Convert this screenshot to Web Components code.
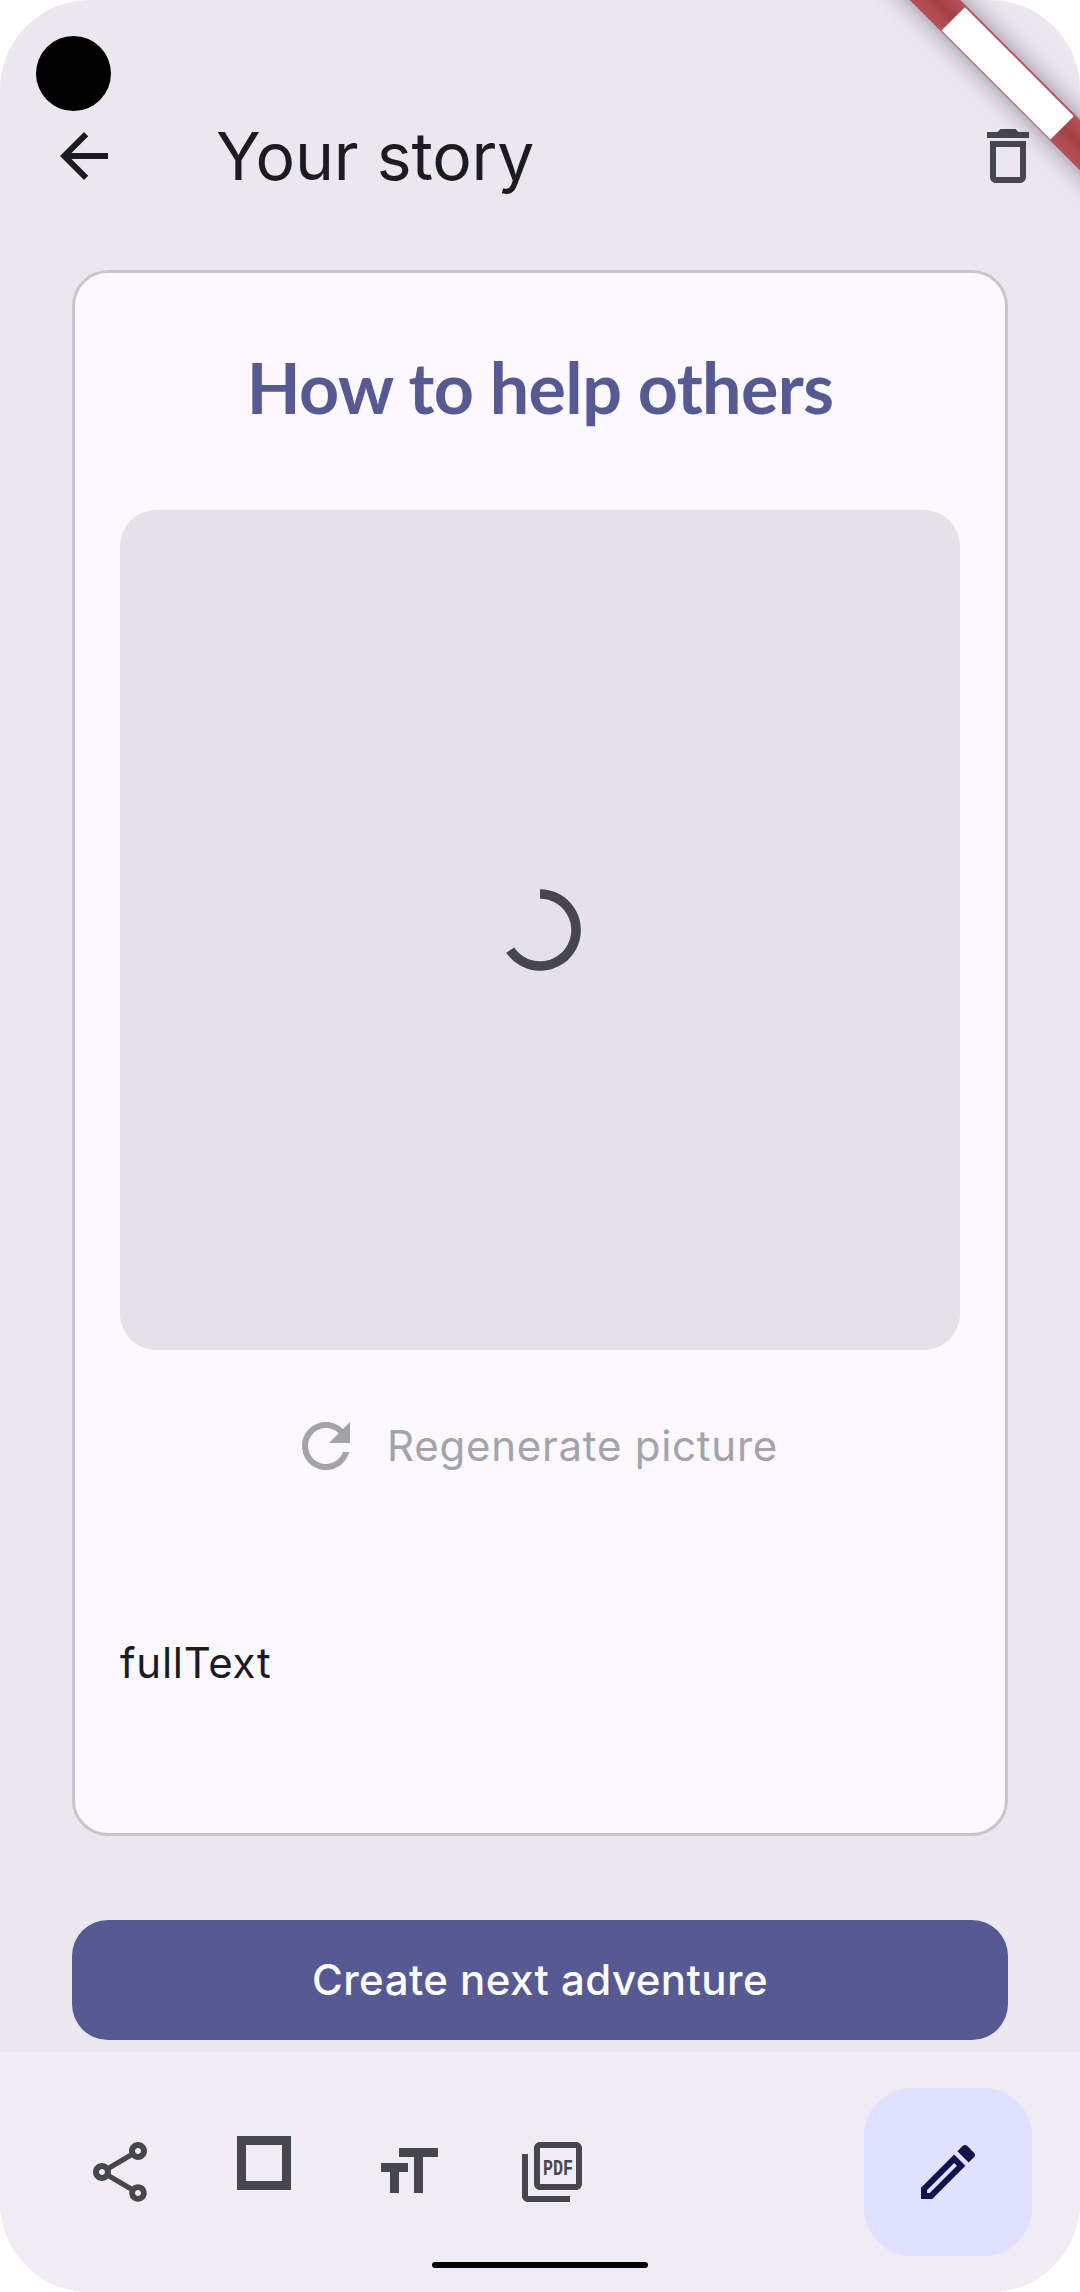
<!DOCTYPE html>
<html>
<head>
<meta charset="utf-8">
<title>Your story</title>
<style>
  html, body { margin: 0; padding: 0; background: #fff; }
  body { font-family: Inter, "Noto Sans", sans-serif; }
</style>
</head>
<body>
<story-screen>
  <top-bar slot="top" heading="Your story"></top-bar>
  <story-card slot="main" heading="How to help others" body="fullText"></story-card>
  <primary-button slot="main">Create next adventure</primary-button>
  <action-bar slot="bottom"></action-bar>
</story-screen>

<script>
const ICONS = {
    back: 'M20 11H7.83l5.59-5.59L12 4l-8 8 8 8 1.41-1.41L7.83 13H20v-2z',
    trash: 'M6 19c0 1.1.9 2 2 2h8c1.1 0 2-.9 2-2V7H6v12zM8 9h8v10H8V9zm7.5-5l-1-1h-5l-1 1H5v2h14V4h-3.5z',
    refresh: 'M17.65 6.35C16.2 4.9 14.21 4 12 4c-4.42 0-7.99 3.58-7.99 8s3.57 8 7.99 8c3.73 0 6.84-2.55 7.73-6h-2.08c-.82 2.33-3.04 4-5.65 4-3.31 0-6-2.69-6-6s2.69-6 6-6c1.66 0 3.14.69 4.22 1.78L13 11h7V4l-2.35 2.35z',
    share: 'M18 16.08c-.76 0-1.44.3-1.96.77L8.91 12.7c.05-.23.09-.46.09-.7s-.04-.47-.09-.7l7.05-4.11c.54.5 1.25.81 2.04.81 1.66 0 3-1.34 3-3s-1.34-3-3-3-3 1.34-3 3c0 .24.04.47.09.7L8.04 9.81C7.5 9.31 6.79 9 6 9c-1.66 0-3 1.34-3 3s1.34 3 3 3c.79 0 1.5-.31 2.04-.81l7.12 4.16c-.05.21-.08.43-.08.65 0 1.61 1.31 2.92 2.92 2.92s2.92-1.31 2.92-2.92-1.31-2.92-2.92-2.92zM18 4c.55 0 1 .45 1 1s-.45 1-1 1-1-.45-1-1 .45-1 1-1zM6 13c-.55 0-1-.45-1-1s.45-1 1-1 1 .45 1 1-.45 1-1 1zm12 7.02c-.55 0-1-.45-1-1s.45-1 1-1 1 .45 1 1-.45 1-1 1z',
    square: 'M3 0h18v18H3zM6 3v12h12V3z',
    size: 'M9 4v3h5v12h3V7h5V4H9zm-6 8h3v7h3v-7h3V9H3v3z',
    pdf: 'M20 2H8c-1.1 0-2 .9-2 2v12c0 1.1.9 2 2 2h12c1.1 0 2-.9 2-2V4c0-1.1-.9-2-2-2zm0 14H8V4h12v12zM4 6H2v14c0 1.1.9 2 2 2h14v-2H4V6z',
    edit: 'M14.06 9.02l.92.92L5.92 19H5v-.92l9.06-9.06M17.66 3c-.25 0-.51.1-.7.29l-1.83 1.83 3.75 3.75 1.83-1.83c.39-.39.39-1.02 0-1.41l-2.34-2.34c-.2-.2-.45-.29-.71-.29zm-3.6 3.19L3 17.25V21h3.75L17.81 9.94l-3.75-3.75z'
};

class AppIcon extends HTMLElement {
    connectedCallback() {
        const name = this.getAttribute('name');
        const extra = name === 'pdf'
            ? '<text x="9" y="13" font-family="Liberation Mono, monospace" font-weight="700" font-size="7.4" textLength="10" lengthAdjust="spacingAndGlyphs">PDF</text>'
            : '';
        const rule = name === 'square' ? 'fill-rule="evenodd"' : '';
        this.attachShadow({mode: 'open'}).innerHTML = `
            <style>
                :host { display: block; width: 72px; height: 72px; color: #46464f; }
                svg { display: block; width: 100%; height: 100%; fill: currentColor; }
            </style>
            <svg viewBox="0 0 24 24"><path ${rule} d="${ICONS[name]}"/>${extra}</svg>
        `;
    }
}
customElements.define('app-icon', AppIcon);

class StoryScreen extends HTMLElement {
    constructor() {
        super();
        this.attachShadow({mode: 'open'}).innerHTML = `
            <style>
                :host {
                    display: flex;
                    flex-direction: column;
                    position: relative;
                    width: 1080px;
                    height: 2292px;
                    overflow: hidden;
                    border-radius: 90px;
                    background: #eae7ee;
                }
                .main {
                    flex: 1;
                    display: flex;
                    flex-direction: column;
                    gap: 84px;
                    padding: 30px 72px 0;
                }
                .camera {
                    position: absolute;
                    left: 36px;
                    top: 36px;
                    width: 75px;
                    height: 75px;
                    border-radius: 50%;
                    background: #000;
                }
                .home {
                    position: absolute;
                    left: 432px;
                    top: 2262px;
                    width: 216px;
                    height: 6px;
                    border-radius: 3px;
                    background: #000;
                }
                .ribbon {
                    position: absolute;
                    left: 758px;
                    top: 55px;
                    width: 500px;
                    height: 36px;
                    transform: rotate(45deg);
                    display: flex;
                    align-items: center;
                    justify-content: center;
                    background: linear-gradient(#b6525a, #a24245 50%, #b6525a);
                    box-shadow: 0 0 24px rgba(50, 40, 70, .5);
                }
                .ribbon i { display: block; width: 154px; height: 33px; background: #fff; }
            </style>
            <slot name="top"></slot>
            <div class="main"><slot name="main"></slot></div>
            <slot name="bottom"></slot>
            <div class="camera"></div>
            <div class="home"></div>
            <div class="ribbon"><i></i></div>
        `;
    }
}
customElements.define('story-screen', StoryScreen);

class TopBar extends HTMLElement {
    connectedCallback() {
        this.attachShadow({mode: 'open'}).innerHTML = `
            <style>
                :host {
                    display: flex;
                    align-items: center;
                    height: 168px;
                    margin-top: 72px;
                    padding: 0 36px 0 48px;
                    color: #1b1b21;
                }
                h1 {
                    flex: 1;
                    margin: 0 0 0 96px;
                    font: 400 66px/1 Inter, sans-serif;
                    letter-spacing: -.2px;
                }
                .back { color: #1b1b21; }
            </style>
            <app-icon class="back" name="back"></app-icon>
            <h1>${this.getAttribute('heading')}</h1>
            <app-icon name="trash"></app-icon>
        `;
    }
}
customElements.define('top-bar', TopBar);

class LoadingPicture extends HTMLElement {
    constructor() {
        super();
        this.attachShadow({mode: 'open'}).innerHTML = `
            <style>
                :host {
                    display: flex;
                    align-items: center;
                    justify-content: center;
                    width: 840px;
                    height: 840px;
                    border-radius: 36px;
                    background: #e4e1e9;
                }
                svg { display: block; width: 90px; height: 90px; }
            </style>
            <svg viewBox="0 0 90 90"><path d="M45 9A36 36 0 1 1 15.2 65.1" fill="none" stroke="#46464f" stroke-width="9.6"/></svg>
        `;
    }
}
customElements.define('loading-picture', LoadingPicture);

class StoryCard extends HTMLElement {
    connectedCallback() {
        this.attachShadow({mode: 'open'}).innerHTML = `
            <style>
                :host {
                    display: flex;
                    flex-direction: column;
                    box-sizing: border-box;
                    height: 1566px;
                    padding: 0 45px;
                    border: 3px solid #c8c5d0;
                    border-radius: 36px;
                    background: #fbf8ff;
                }
                h2 {
                    margin: 0;
                    box-sizing: border-box;
                    height: 237px;
                    padding-bottom: 9px;
                    display: flex;
                    align-items: center;
                    justify-content: center;
                    font: 700 70px/1 Lato, sans-serif;
                    letter-spacing: -.6px;
                    color: #565992;
                }
                .regen {
                    display: flex;
                    align-items: center;
                    justify-content: center;
                    gap: 37px;
                    height: 192px;
                    font: 400 42px/1 Inter, sans-serif;
                    letter-spacing: .75px;
                    color: #a4a3a9;
                }
                .regen svg { display: block; width: 48px; height: 48px; fill: currentColor; }
                p {
                    margin: 0;
                    padding-top: 96px;
                    font: 400 42px/1.2 Inter, sans-serif;
                    letter-spacing: .75px;
                    color: #1b1b21;
                }
            </style>
            <h2>${this.getAttribute('heading')}</h2>
            <loading-picture></loading-picture>
            <div class="regen">
                <svg viewBox="4 4 16 16"><path d="${ICONS.refresh}"/></svg>
                <span>Regenerate picture</span>
            </div>
            <p>${this.getAttribute('body')}</p>
        `;
    }
}
customElements.define('story-card', StoryCard);

class PrimaryButton extends HTMLElement {
    constructor() {
        super();
        this.attachShadow({mode: 'open'}).innerHTML = `
            <style>
                :host {
                    display: flex;
                    align-items: center;
                    justify-content: center;
                    height: 120px;
                    border-radius: 36px;
                    background: #565992;
                    color: #fff;
                    font: 500 42px/1 Inter, sans-serif;
                    letter-spacing: .45px;
                }
            </style>
            <slot></slot>
        `;
    }
}
customElements.define('primary-button', PrimaryButton);

class ActionBar extends HTMLElement {
    constructor() {
        super();
        this.attachShadow({mode: 'open'}).innerHTML = `
            <style>
                :host {
                    display: flex;
                    align-items: center;
                    box-sizing: border-box;
                    height: 240px;
                    padding: 0 48px;
                    background: #efecf3;
                }
                .btn {
                    width: 144px;
                    height: 144px;
                    display: flex;
                    align-items: center;
                    justify-content: center;
                }
                .fab {
                    margin-left: auto;
                    width: 168px;
                    height: 168px;
                    border-radius: 48px;
                    background: #e0e0ff;
                    display: flex;
                    align-items: center;
                    justify-content: center;
                }
                .fab app-icon { color: #12144b; }
            </style>
            <div class="btn"><app-icon name="share"></app-icon></div>
            <div class="btn"><app-icon name="square"></app-icon></div>
            <div class="btn"><app-icon name="size"></app-icon></div>
            <div class="btn"><app-icon name="pdf"></app-icon></div>
            <div class="fab"><app-icon name="edit"></app-icon></div>
        `;
    }
}
customElements.define('action-bar', ActionBar);
</script>
</body>
</html>
